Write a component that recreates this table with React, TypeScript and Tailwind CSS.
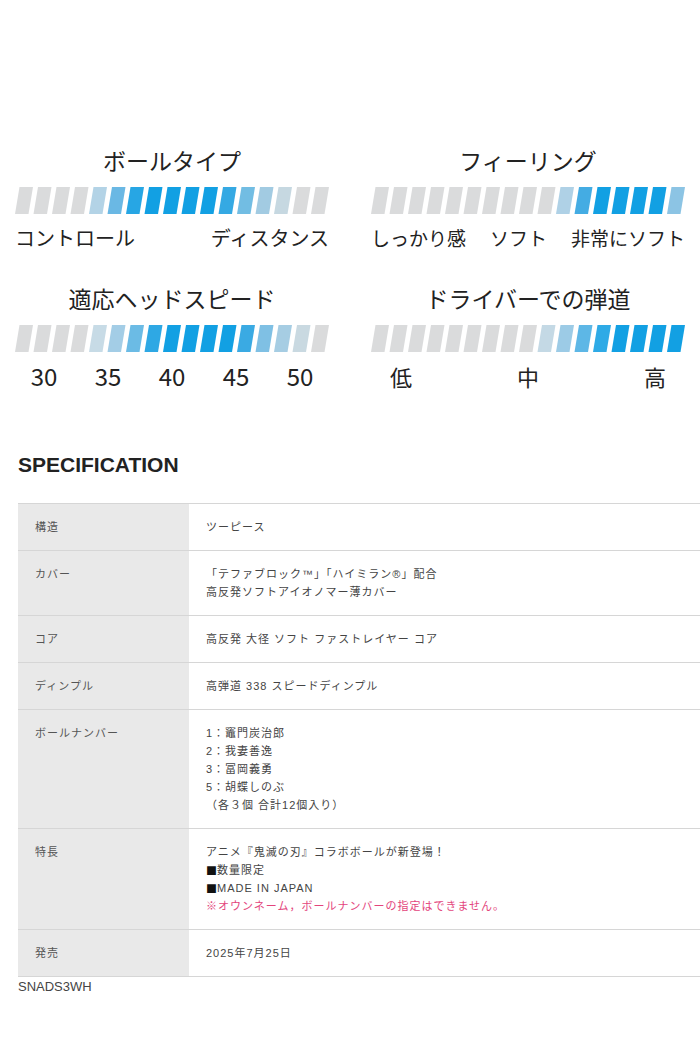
const G = "#dadbdc";
const B = "#12a0e3";

const charts = [
  {
    title: "ボールタイプ",
    colors: [G, G, G, G, "#b3d3e6", "#6ab8e4", "#27a6e4", B, B, B, B, "#35a9e3", "#72bde3", "#a2cbe2", "#c6d8e1", G, G],
    labels: "ends" as const,
    items: ["コントロール", "ディスタンス"],
  },
  {
    title: "フィーリング",
    colors: [G, G, G, G, G, G, G, G, G, G, "#afd1e6", "#44ace3", B, B, B, B, "#8cc4e4"],
    labels: "three" as const,
    items: ["しっかり感", "ソフト", "非常にソフト"],
  },
  {
    title: "適応ヘッドスピード",
    colors: [G, G, G, G, "#c7dbe6", "#a3cde6", "#6bbbe5", "#2ea8e4", B, B, B, B, "#3aaae3", "#7fc0e4", "#a6cde3", "#c9d9e1", G],
    labels: "numbers" as const,
    items: ["30", "35", "40", "45", "50"],
  },
  {
    title: "ドライバーでの弾道",
    colors: [G, G, G, G, G, G, G, G, G, "#c4d9e5", "#9ccbe6", "#5db7e6", "#2eaae6", B, B, B, B],
    labels: "levels" as const,
    items: ["低", "中", "高"],
  },
];

type Line = { text: string; red?: boolean; square?: boolean };

const specs: { label: string; lines: Line[] }[] = [
  { label: "構造", lines: [{ text: "ツーピース" }] },
  {
    label: "カバー",
    lines: [{ text: "「テファブロック™」「ハイミラン®」配合" }, { text: "高反発ソフトアイオノマー薄カバー" }],
  },
  { label: "コア", lines: [{ text: "高反発 大径 ソフト ファストレイヤー コア" }] },
  { label: "ディンプル", lines: [{ text: "高弾道 338 スピードディンプル" }] },
  {
    label: "ボールナンバー",
    lines: [
      { text: "1：竈門炭治郎" },
      { text: "2：我妻善逸" },
      { text: "3：冨岡義勇" },
      { text: "5：胡蝶しのぶ" },
      { text: "（各３個 合計12個入り）" },
    ],
  },
  {
    label: "特長",
    lines: [
      { text: "アニメ『鬼滅の刃』コラボボールが新登場！" },
      { text: "数量限定", square: true },
      { text: "MADE IN JAPAN", square: true },
      { text: "※オウンネーム，ボールナンバーの指定はできません。", red: true },
    ],
  },
  { label: "発売", lines: [{ text: "2025年7月25日" }] },
];

function Bar({ colors }: { colors: string[] }) {
  return (
    <svg width="314" height="27" viewBox="0 0 314 27" className="block">
      {colors.map((c, i) => {
        const x = i * 18.5;
        return <polygon key={i} points={`${x},27 ${x + 13.5},27 ${x + 18},0 ${x + 4.5},0`} fill={c} />;
      })}
    </svg>
  );
}

function Labels({ kind, items }: { kind: string; items: string[] }) {
  if (kind === "ends") {
    return (
      <div className="flex h-[28px] justify-between text-[20px] leading-[28px]">
        {items.map((t) => (
          <span key={t}>{t}</span>
        ))}
      </div>
    );
  }
  if (kind === "three") {
    return (
      <div className="flex h-[28px] justify-between text-[19px] leading-[28px]">
        {items.map((t) => (
          <span key={t}>{t}</span>
        ))}
      </div>
    );
  }
  const w = kind === "numbers" ? "w-[64px] text-[24px]" : "w-[127px] text-[22px]";
  return (
    <div className="flex h-[28px] justify-center leading-[28px]">
      {items.map((t) => (
        <span key={t} className={`${w} shrink-0 text-center`}>
          {t}
        </span>
      ))}
    </div>
  );
}

export default function App() {
  return (
    <div className="min-h-[1050px] w-[700px] overflow-hidden bg-white text-[#222] font-['Noto_Sans_CJK_JP',sans-serif]">
      <div className="grid grid-cols-[314px_314px] gap-x-[42px] gap-y-[31px] pl-[15px] pt-[145px]">
        {charts.map((c) => (
          <div key={c.title}>
            <div className="h-[30px] text-center text-[23px] leading-[30px]">{c.title}</div>
            <div className="mt-[12px]">
              <Bar colors={c.colors} />
            </div>
            <div className="mt-[10px]">
              <Labels kind={c.labels} items={c.items} />
            </div>
          </div>
        ))}
      </div>

      <h2 className="ml-[18px] mt-[63px] h-[24px] text-[21px] font-bold leading-[24px] text-[#222] font-['Liberation_Sans',Arial,sans-serif]">
        SPECIFICATION
      </h2>

      <div className="ml-[18px] mt-[26px] border-t border-[#d6d6d6] text-[11px] leading-[18px] tracking-[1px] font-['Liberation_Sans','Noto_Sans_CJK_JP',sans-serif]">
        {specs.map((s) => (
          <div key={s.label} className="flex border-b border-[#d6d6d6]">
            <div className="w-[171px] shrink-0 bg-[#e9e9e9] px-[17px] py-[14px] text-[#555]">{s.label}</div>
            <div className="flex-1 px-[17px] py-[14px] text-[#444]">
              {s.lines.map((l) => (
                <div key={l.text} className={`h-[18px] ${l.red ? "text-[#e3457c]" : ""}`}>
                  {l.square && (
                    <span className="inline-block h-[18px] align-top leading-[18px] tracking-normal text-[#111] font-['Noto_Sans_CJK_JP',sans-serif]">
                      ■
                    </span>
                  )}
                  {l.text}
                </div>
              ))}
            </div>
          </div>
        ))}
      </div>

      <div className="ml-[18px] mt-[2px] text-[13px] leading-[16px] text-[#444] font-['Liberation_Sans',Arial,sans-serif]">
        SNADS3WH
      </div>
    </div>
  );
}
